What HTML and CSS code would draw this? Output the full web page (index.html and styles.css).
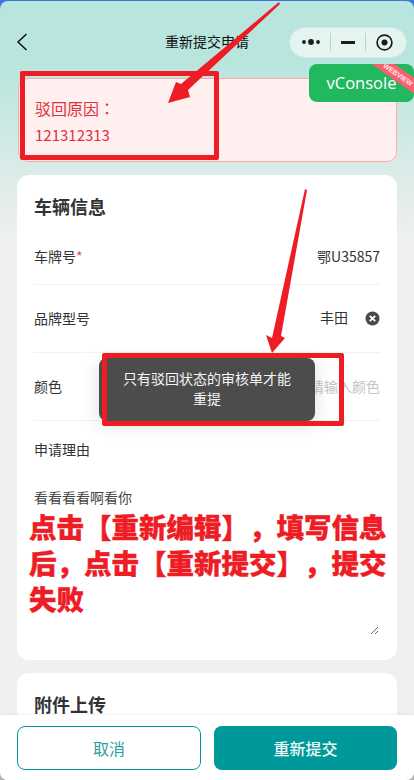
FILE: index.html
```html
<!DOCTYPE html>
<html lang="zh">
<head>
<meta charset="utf-8">
<title>重新提交申请</title>
<link rel="stylesheet" href="styles.css">
</head>
<body>
<div class="page">
  <header class="nav">
    <svg class="back" width="12" height="18" viewBox="0 0 12 18"><path d="M10.500 1 2 9l8.500 8" fill="none" stroke="#111" stroke-width="1.500"/></svg>
    <h1 class="nav-title">重新提交申请</h1>
    <div class="capsule">
      <svg class="cap-icon" width="18" height="8" viewBox="0 0 18 8"><circle cx="2" cy="4" r="1.900" fill="#1c1c1c"/><circle cx="9" cy="4" r="2.900" fill="#1c1c1c"/><circle cx="16" cy="4" r="1.900" fill="#1c1c1c"/></svg>
      <span class="cap-sep"></span>
      <span class="cap-minus"></span>
      <span class="cap-sep"></span>
      <svg class="cap-icon" width="17" height="17" viewBox="0 0 17 17"><circle cx="8.500" cy="8.500" r="7.400" fill="none" stroke="#1c1c1c" stroke-width="1.700"/><circle cx="8.500" cy="8.500" r="3" fill="#1c1c1c"/></svg>
    </div>
  </header>

  <section class="reject">
    <div class="reject-title">驳回原因<span class="colon" lang="zh-Hant">：</span></div>
    <div class="reject-text">121312313</div>
  </section>

  <section class="card card-main">
    <h2 class="card-title">车辆信息</h2>
    <div class="row row-first">
      <span class="label">车牌号<em class="req">*</em></span>
      <span class="value">鄂U35857</span>
    </div>
    <div class="row">
      <span class="label">品牌型号</span>
      <span class="brand">
        <span class="value">丰田</span>
        <svg class="clear" width="15" height="15" viewBox="0 0 15 15"><circle cx="7.500" cy="7.500" r="7" fill="#4a4a4a"/><path d="m4.800 4.800 5.400 5.400m0-5.400-5.400 5.400" stroke="#fff" stroke-width="1.800"/></svg>
      </span>
    </div>
    <div class="row">
      <span class="label">颜色</span>
      <span class="placeholder">请输入颜色</span>
    </div>
    <div class="reason">
      <div class="label">申请理由</div>
      <textarea class="reason-input" readonly>看看看看啊看你</textarea>
    </div>
  </section>

  <section class="card card-next">
    <h2 class="card-title">附件上传</h2>
  </section>

  <footer class="actions">
    <button class="btn btn-cancel">取消</button>
    <button class="btn btn-submit">重新提交</button>
  </footer>

  <div class="vconsole">vConsole<span class="ribbon">WEBVIEW</span></div>

  <div class="toast">只有驳回状态的审核单才能重提</div>

  <div class="mark mark-reject"></div>
  <div class="mark mark-toast"></div>
  <svg class="arrows" width="414" height="780" viewBox="0 0 414 780">
    <polygon fill="#ee1c25" points="279,2 280,4 188,90 190,97 168,103 176,82 181,84"/>
    <polygon fill="#ee1c25" points="305,189 307,190 281,336 285,338 272,353 266,335 272,338"/>
  </svg>
  <p class="note">点击【重新编辑】，填写信息后，点击【重新提交】，提交失败</p>
</div>
</body>
</html>
```
FILE: styles.css
```css
* { box-sizing: border-box; }
html, body { margin: 0; padding: 0; }
body {
  width: 414px;
  height: 780px;
  overflow: hidden;
  background: linear-gradient(180deg, #3b78d8 0, #3b78d8 100px, #b4b4b4 100px);
  font-family: "Noto Sans CJK SC", "Noto Sans", sans-serif;
  color: #333;
  text-spacing-trim: space-all;
}
.page {
  position: relative;
  width: 414px;
  height: 779px;
  margin-top: 1px;
  overflow: hidden;
  border-radius: 8px;
  background: linear-gradient(180deg, #b8e5dd 0, #b8e5dd 60px, #f0f0f0 240px);
}
.nav {
  position: relative;
  display: flex;
  align-items: center;
  justify-content: space-between;
  height: 30px;
  padding: 0 7px 0 16px;
  top: 26px;
}
.back { display: block; }
.nav-title {
  position: absolute;
  left: 0;
  right: 0;
  top: 4px;
  margin: 0;
  font-size: 14px;
  font-weight: 400;
  line-height: 20px;
  text-align: center;
  color: #111;
}
.capsule {
  display: flex;
  align-items: center;
  justify-content: space-between;
  width: 118px;
  height: 31px;
  padding: 0 13px 0 12px;
  border: 1px solid #d4e5e3;
  border-radius: 16px;
  background: #e3f4f1;
}
.cap-icon { display: block; flex: none; }
.cap-sep { width: 1px; height: 18px; background: #c4cfcd; flex: none; }
.cap-minus { width: 14px; height: 3px; background: #1c1c1c; flex: none; }
.reject {
  margin: 47px 17px 0 18px;
  height: 84px;
  padding: 17px 16px 0;
  border: 1px solid #ffaaa5;
  border-radius: 10px;
  background: #fff0ef;
  color: #e2303c;
}
.reject-title { font-size: 16px; line-height: 24px; }
.colon { font-family: "Noto Sans CJK TC", sans-serif; }
.reject-text { font-size: 15px; line-height: 22px; margin-top: 4px; }
.card {
  margin: 0 17px;
  padding: 0 17px;
  border-radius: 12px;
  background: #fff;
}
.card-main { height: 485px; margin-top: 13px; }
.card-next { height: 100px; margin-top: 13px; }
.card-title {
  margin: 0;
  padding-top: 18px;
  font-size: 18px;
  font-weight: 700;
  line-height: 27px;
  color: #333;
}
.row {
  display: flex;
  align-items: center;
  justify-content: space-between;
  height: 68px;
  padding-bottom: 2px;
  border-bottom: 1px solid #f2f2f2;
  font-size: 14px;
}
.row-first { height: 65px; padding: 8px 0 0; }
.label { font-size: 14px; line-height: 20px; color: #333; }
.req { font-style: normal; color: #f0436a; }
.value { font-size: 14px; line-height: 20px; color: #333; }
.brand { display: flex; align-items: center; gap: 17px; }
.brand .value { position: relative; top: -1px; }
.clear { display: block; margin-top: 2px; }
.placeholder { color: #c4c4c4; font-size: 14px; }
.reason { padding-top: 18px; }
.reason-input {
  display: block;
  width: 345px;
  height: 148px;
  margin-top: 28px;
  padding: 0;
  border: 0;
  outline: 0;
  background: transparent;
  font-family: inherit;
  font-size: 14px;
  line-height: 20px;
  color: #444;
  resize: both;
  overflow: auto;
}
.actions {
  position: absolute;
  left: 0;
  right: 0;
  top: 714px;
  height: 65px;
  display: flex;
  gap: 13px;
  padding: 11px 17px 0;
  background: #fff;
  box-shadow: 0 -1px 3px rgba(0,0,0,.06);
}
.btn {
  height: 44px;
  border-radius: 8px;
  font-family: inherit;
  font-size: 16px;
  padding: 0;
}
.btn-cancel { width: 184px; border: 1px solid #009999; background: #fff; color: #2a9da0; }
.btn-submit { width: 183px; border: 0; background: #009999; color: #f2fbfb; font-weight: 500; }
.vconsole {
  position: absolute;
  left: 309px;
  top: 63px;
  width: 105px;
  height: 38px;
  overflow: hidden;
  border-radius: 8px;
  background: #22b85f;
  color: #fff;
  font-family: "Open Sans", sans-serif;
  font-size: 16.500px;
  line-height: 37px;
  text-align: center;
}
.ribbon {
  position: absolute;
  left: 54px;
  top: 4px;
  width: 70px;
  height: 13px;
  transform: rotate(35deg);
  background: #f8606f;
  color: #ffe4e6;
  font-family: "Liberation Sans", sans-serif;
  font-size: 7px;
  font-weight: 700;
  line-height: 13px;
  text-align: center;
}
.toast {
  position: absolute;
  left: 99px;
  top: 357px;
  width: 216px;
  height: 63px;
  padding: 10px 24px;
  border-radius: 8px;
  background: #4c4c4c;
  box-shadow: 0 4px 18px rgba(0,0,0,.14);
  color: #f4f4f4;
  font-size: 14px;
  line-height: 20px;
  text-align: center;
}
.mark {
  position: absolute;
  border: 5px solid #ee1c25;
  border-radius: 2px;
}
.mark-reject { left: 20px; top: 70px; width: 199px; height: 89px; }
.mark-toast { left: 102px; top: 352px; width: 242px; height: 73px; }
.arrows { position: absolute; left: 0; top: -1px; display: block; }
.note {
  position: absolute;
  left: 29px;
  top: 507px;
  width: 362px;
  margin: 0;
  font-size: 27.500px;
  font-weight: 900;
  line-height: 36px;
  color: #ee1c25;
  -webkit-text-stroke: 0.4px #ee1c25;
}
```
